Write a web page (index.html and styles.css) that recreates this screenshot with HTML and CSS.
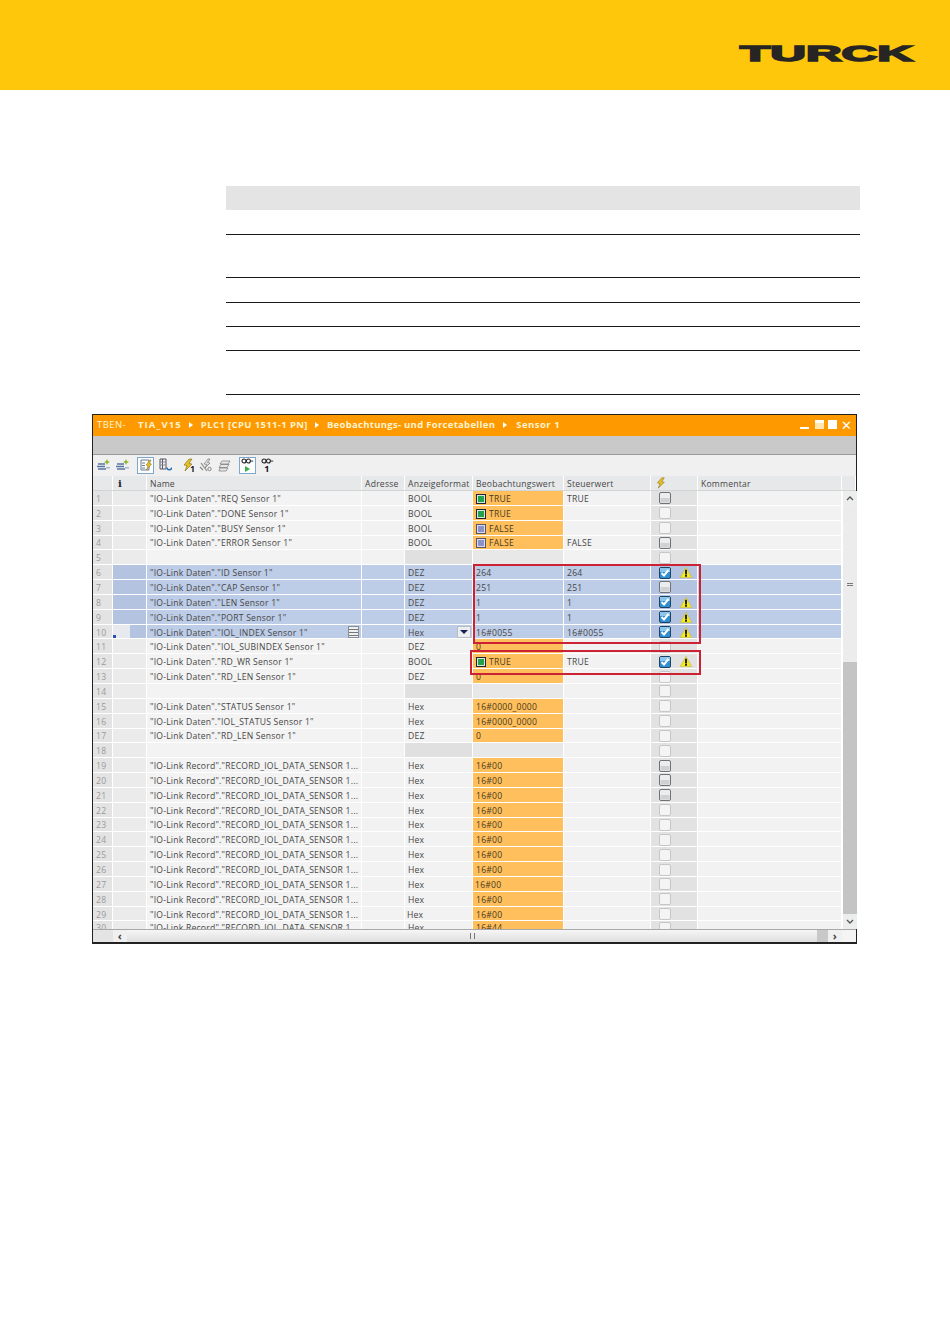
FILE: index.html
```html
<!DOCTYPE html>
<html lang="de">
<head>
<meta charset="utf-8">
<title>TURCK</title>
<link rel="stylesheet" href="styles.css">
</head>
<body>
<svg class="defs" width="0" height="0" aria-hidden="true">
  <symbol id="cb" viewBox="0 0 12 12"><rect x=".5" y=".5" width="11" height="11" rx="1.5" fill="#eceded" stroke="#6f7376"/><rect x="1.5" y="6" width="9" height="4.5" fill="#cfd1d3"/></symbol>
  <symbol id="cl" viewBox="0 0 12 12"><rect x=".5" y=".5" width="11" height="11" rx="1.5" fill="#f4f4f4" stroke="#c4c6c8"/></symbol>
  <symbol id="cc" viewBox="0 0 12 12"><rect x=".5" y=".5" width="11" height="11" rx="1.5" fill="#2f8fd0" stroke="#1f4462"/><rect x="1" y="1" width="10" height="4" fill="#8cc6ee"/><path d="M2.5 6l2.5 2.5 4.5-5.5" fill="none" stroke="#fff" stroke-width="2"/></symbol>
  <symbol id="wa" viewBox="0 0 12 11"><path d="M6 .3L11.8 10.7H.2z" fill="#f6ea18" stroke="#bdb660" stroke-width=".6"/><path d="M5.1 2.8h1.8v4.6H5.1zM5.1 8h1.8v1.7H5.1z" fill="#111"/></symbol>
  <symbol id="bl" viewBox="0 0 14 14"><path d="M1 6h7M0 8.5h8M1 11h8" stroke="#5a76a0" stroke-width="1.3"/><path d="M10 1l.9 2.1L13 4l-2.1.9L10 7l-.9-2.1L7 4l2.1-.9z" fill="#8fb52e"/><path d="M9 9h4v1.5H9z" fill="#a4b8d0"/></symbol>
  <symbol id="bo" viewBox="0 0 14 14"><path d="M9 1L4 7l3 .5L5 13l7-7-3-.5L12 1z" fill="#e8c020" stroke="#7a6a20" stroke-width=".6"/></symbol>
  <symbol id="wr" viewBox="0 0 14 14"><path d="M9 1L5 6l3 .5L6 10l5-5-2.500-.5L11 1z" fill="#e4e4e4" stroke="#777" stroke-width=".7"/><path d="M2 5l6 8M1 9l3 3" stroke="#888" stroke-width="1.200" fill="none"/><circle cx="10.500" cy="11" r="1.700" fill="none" stroke="#888"/></symbol>
  <symbol id="st" viewBox="0 0 14 14"><path d="M4 3h8l-2 3h-8zM3 6.500h8l-2 3h-8zM2 10h8l-2 3h-7z" fill="#e8e8e8" stroke="#777" stroke-width=".7"/></symbol>
  <symbol id="gl" viewBox="0 0 14 8"><circle cx="3" cy="3.500" r="2.300" fill="none" stroke="#222" stroke-width="1.200"/><circle cx="8" cy="3.500" r="2.300" fill="none" stroke="#222" stroke-width="1.200"/><path d="M10 3.500h3.500" stroke="#222"/></symbol>
  <symbol id="up" viewBox="0 0 8 5"><path d="M1 4l3-3 3 3" fill="none" stroke="#555" stroke-width="1.300"/></symbol>
  <symbol id="dn" viewBox="0 0 8 5"><path d="M1 1l3 3 3-3" fill="none" stroke="#555" stroke-width="1.300"/></symbol>
</svg>

<header class="band">
  <svg class="logo" viewBox="0 0 175 18" role="img" aria-label="TURCK"><text x="1" y="16.300" textLength="173" lengthAdjust="spacingAndGlyphs" class="logo-text">TURCK</text></svg>
</header>

<section class="doc">
  <div class="dt-head"></div>
  <div class="dt-row h25"></div>
  <div class="dt-row h43"></div>
  <div class="dt-row h25"></div>
  <div class="dt-row h24"></div>
  <div class="dt-row h24"></div>
  <div class="dt-row h44"></div>
</section>

<section class="win">
  <div class="title">
    <span class="t0">TBEN-</span><span class="t1">TIA_V15</span><i class="arr"></i><span class="t2">PLC1 [CPU 1511-1 PN]</span><i class="arr"></i><span class="t3">Beobachtungs- und Forcetabellen</span><i class="arr"></i><span class="t4">Sensor 1</span>
    <span class="ctl"><i class="c-min"></i><i class="c-res"></i><i class="c-max"></i><span class="c-x">✕</span></span>
  </div>
  <div class="band2"></div>
  <div class="tools">
    <svg class="ti"><use href="#bl"/></svg>
    <svg class="ti"><use href="#bl"/></svg>
    <span class="on"><svg class="ti" viewBox="0 0 14 14"><path d="M2 2h8v10H2z" fill="#fff" stroke="#6a7a90"/><path d="M3 5h3M3 7.500h3M3 10h3" stroke="#6a7a90"/><path d="M11 2L7 7l2 .5L7.500 12 12.500 6l-2-.5L12 2z" fill="#e8c020" stroke="#7a6a20" stroke-width=".5"/></svg></span>
    <svg class="ti l1" viewBox="0 0 14 14"><path d="M2 1h6v10H2zM4.500 1v10" fill="none" stroke="#556" /><path d="M2 4h6M2 7h6" stroke="#889"/><path d="M9 9.500a2.300 2.300 0 1 0 4.600 0" fill="none" stroke="#2a70b0" stroke-width="1.500"/></svg>
    <span class="bolt1"><svg class="ti"><use href="#bo"/></svg><b>1</b></span>
    <svg class="ti"><use href="#wr"/></svg>
    <svg class="ti"><use href="#st"/></svg>
    <span class="on on2"><svg class="gl"><use href="#gl"/></svg><i class="play"></i></span>
    <span class="g1"><svg class="gl"><use href="#gl"/></svg><b>1</b></span>
  </div>
  <div class="thead">
    <span></span><span class="info">i</span><span>Name</span><span>Adresse</span><span>Anzeigeformat</span><span>Beobachtungswert</span><span>Steuerwert</span><span><svg class="bolt"><use href="#bo"/></svg></span><span>Kommentar</span><span></span>
  </div>
  <div class="body">
    <div class="rows">
      <div class="r"><s>1</s><u></u><em>"IO-Link Daten"."REQ Sensor 1"</em><u></u><u class="f">BOOL</u><u class="v"><i class="sq g"></i>TRUE</u><u>TRUE</u><u class="x"><svg class="ck"><use href="#cb"/></svg></u><u></u></div>
      <div class="r"><s>2</s><u></u><em>"IO-Link Daten"."DONE Sensor 1"</em><u></u><u class="f">BOOL</u><u class="v"><i class="sq g"></i>TRUE</u><u></u><u class="x"><svg class="ck"><use href="#cl"/></svg></u><u></u></div>
      <div class="r"><s>3</s><u></u><em>"IO-Link Daten"."BUSY Sensor 1"</em><u></u><u class="f">BOOL</u><u class="v"><i class="sq b"></i>FALSE</u><u></u><u class="x"><svg class="ck"><use href="#cl"/></svg></u><u></u></div>
      <div class="r"><s>4</s><u></u><em>"IO-Link Daten"."ERROR Sensor 1"</em><u></u><u class="f">BOOL</u><u class="v"><i class="sq b"></i>FALSE</u><u>FALSE</u><u class="x"><svg class="ck"><use href="#cb"/></svg></u><u></u></div>
      <div class="r e"><s>5</s><u></u><em></em><u></u><u class="f"></u><u class="n"></u><u></u><u class="x"><svg class="ck"><use href="#cl"/></svg></u><u></u></div>
      <div class="r sel"><s>6</s><u></u><em>"IO-Link Daten"."ID Sensor 1"</em><u></u><u class="f">DEZ</u><u>264</u><u>264</u><u class="x"><svg class="ck"><use href="#cc"/></svg><svg class="wa"><use href="#wa"/></svg></u><u></u></div>
      <div class="r sel"><s>7</s><u></u><em>"IO-Link Daten"."CAP Sensor 1"</em><u></u><u class="f">DEZ</u><u>251</u><u>251</u><u class="x"><svg class="ck"><use href="#cb"/></svg></u><u></u></div>
      <div class="r sel"><s>8</s><u></u><em>"IO-Link Daten"."LEN Sensor 1"</em><u></u><u class="f">DEZ</u><u>1</u><u>1</u><u class="x"><svg class="ck"><use href="#cc"/></svg><svg class="wa"><use href="#wa"/></svg></u><u></u></div>
      <div class="r sel"><s>9</s><u></u><em>"IO-Link Daten"."PORT Sensor 1"</em><u></u><u class="f">DEZ</u><u>1</u><u>1</u><u class="x"><svg class="ck"><use href="#cc"/></svg><svg class="wa"><use href="#wa"/></svg></u><u></u></div>
      <div class="r sel act"><s>10</s><u class="mark"><i class="lite"></i><i class="dot"></i></u><em>"IO-Link Daten"."IOL_INDEX Sensor 1"<i class="mini"></i></em><u></u><u class="f">Hex<i class="drop"></i></u><u>16#0055</u><u>16#0055</u><u class="x"><svg class="ck"><use href="#cc"/></svg><svg class="wa"><use href="#wa"/></svg></u><u></u></div>
      <div class="r"><s>11</s><u></u><em>"IO-Link Daten"."IOL_SUBINDEX Sensor 1"</em><u></u><u class="f">DEZ</u><u class="v">0</u><u></u><u class="x"><svg class="ck"><use href="#cl"/></svg></u><u></u></div>
      <div class="r"><s>12</s><u></u><em>"IO-Link Daten"."RD_WR Sensor 1"</em><u></u><u class="f">BOOL</u><u class="v"><i class="sq g"></i>TRUE</u><u>TRUE</u><u class="x"><svg class="ck"><use href="#cc"/></svg><svg class="wa"><use href="#wa"/></svg></u><u></u></div>
      <div class="r"><s>13</s><u></u><em>"IO-Link Daten"."RD_LEN Sensor 1"</em><u></u><u class="f">DEZ</u><u class="v">0</u><u></u><u class="x"><svg class="ck"><use href="#cl"/></svg></u><u></u></div>
      <div class="r e"><s>14</s><u></u><em></em><u></u><u class="f"></u><u class="n"></u><u></u><u class="x"><svg class="ck"><use href="#cl"/></svg></u><u></u></div>
      <div class="r"><s>15</s><u></u><em>"IO-Link Daten"."STATUS Sensor 1"</em><u></u><u class="f">Hex</u><u class="v">16#0000_0000</u><u></u><u class="x"><svg class="ck"><use href="#cl"/></svg></u><u></u></div>
      <div class="r"><s>16</s><u></u><em>"IO-Link Daten"."IOL_STATUS Sensor 1"</em><u></u><u class="f">Hex</u><u class="v">16#0000_0000</u><u></u><u class="x"><svg class="ck"><use href="#cl"/></svg></u><u></u></div>
      <div class="r"><s>17</s><u></u><em>"IO-Link Daten"."RD_LEN Sensor 1"</em><u></u><u class="f">DEZ</u><u class="v">0</u><u></u><u class="x"><svg class="ck"><use href="#cl"/></svg></u><u></u></div>
      <div class="r e"><s>18</s><u></u><em></em><u></u><u class="f"></u><u class="n"></u><u></u><u class="x"><svg class="ck"><use href="#cl"/></svg></u><u></u></div>
      <div class="r"><s>19</s><u></u><em>"IO-Link Record"."RECORD_IOL_DATA_SENSOR 1...</em><u></u><u class="f">Hex</u><u class="v">16#00</u><u></u><u class="x"><svg class="ck"><use href="#cb"/></svg></u><u></u></div>
      <div class="r"><s>20</s><u></u><em>"IO-Link Record"."RECORD_IOL_DATA_SENSOR 1...</em><u></u><u class="f">Hex</u><u class="v">16#00</u><u></u><u class="x"><svg class="ck"><use href="#cb"/></svg></u><u></u></div>
      <div class="r"><s>21</s><u></u><em>"IO-Link Record"."RECORD_IOL_DATA_SENSOR 1...</em><u></u><u class="f">Hex</u><u class="v">16#00</u><u></u><u class="x"><svg class="ck"><use href="#cb"/></svg></u><u></u></div>
      <div class="r"><s>22</s><u></u><em>"IO-Link Record"."RECORD_IOL_DATA_SENSOR 1...</em><u></u><u class="f">Hex</u><u class="v">16#00</u><u></u><u class="x"><svg class="ck"><use href="#cl"/></svg></u><u></u></div>
      <div class="r"><s>23</s><u></u><em>"IO-Link Record"."RECORD_IOL_DATA_SENSOR 1...</em><u></u><u class="f">Hex</u><u class="v">16#00</u><u></u><u class="x"><svg class="ck"><use href="#cl"/></svg></u><u></u></div>
      <div class="r"><s>24</s><u></u><em>"IO-Link Record"."RECORD_IOL_DATA_SENSOR 1...</em><u></u><u class="f">Hex</u><u class="v">16#00</u><u></u><u class="x"><svg class="ck"><use href="#cl"/></svg></u><u></u></div>
      <div class="r"><s>25</s><u></u><em>"IO-Link Record"."RECORD_IOL_DATA_SENSOR 1...</em><u></u><u class="f">Hex</u><u class="v">16#00</u><u></u><u class="x"><svg class="ck"><use href="#cl"/></svg></u><u></u></div>
      <div class="r"><s>26</s><u></u><em>"IO-Link Record"."RECORD_IOL_DATA_SENSOR 1...</em><u></u><u class="f">Hex</u><u class="v">16#00</u><u></u><u class="x"><svg class="ck"><use href="#cl"/></svg></u><u></u></div>
      <div class="r"><s>27</s><u></u><em>"IO-Link Record"."RECORD_IOL_DATA_SENSOR 1...</em><u></u><u class="f">Hex</u><u class="v nudge">16#00</u><u></u><u class="x"><svg class="ck"><use href="#cl"/></svg></u><u></u></div>
      <div class="r"><s>28</s><u></u><em>"IO-Link Record"."RECORD_IOL_DATA_SENSOR 1...</em><u></u><u class="f">Hex</u><u class="v">16#00</u><u></u><u class="x"><svg class="ck"><use href="#cl"/></svg></u><u></u></div>
      <div class="r"><s>29</s><u></u><em>"IO-Link Record"."RECORD_IOL_DATA_SENSOR 1...</em><u></u><u class="f nudge">Hex</u><u class="v">16#00</u><u></u><u class="x"><svg class="ck"><use href="#cl"/></svg></u><u></u></div>
      <div class="r last"><s>30</s><u></u><em>"IO-Link Record"."RECORD_IOL_DATA_SENSOR 1...</em><u></u><u class="f">Hex</u><u class="v">16#44</u><u></u><u class="x"><svg class="ck"><use href="#cl"/></svg></u><u></u></div>
    </div>
    <div class="vbar">
      <span class="btn"><svg class="chev"><use href="#up"/></svg></span>
      <span class="thumb"><i class="grip"></i></span>
      <span class="track"></span>
      <span class="btn"><svg class="chev"><use href="#dn"/></svg></span>
    </div>
  </div>
  <div class="hbar">
    <span class="hgap"></span>
    <span class="hbtn">‹</span>
    <span class="hthumb"><i class="hgrip"></i></span>
    <span class="htrack"></span>
    <span class="hbtn">›</span>
    <span class="corner"></span>
  </div>
  <div class="red r1"></div>
  <div class="red r2"></div>
</section>
</body>
</html>
```

FILE: styles.css
```css
* { box-sizing: border-box; }
html, body { margin: 0; padding: 0; }
body { background: #fff; width: 950px; height: 1344px; overflow: hidden; font-family: "Open Sans", "Liberation Sans", sans-serif; }
.defs { position: absolute; }
.band { height: 90px; background: #fec70c; display: flex; justify-content: flex-end; padding: 45px 36px 0 0; }
.logo { width: 175px; height: 18px; overflow: visible; }
.logo-text { font-family: "Liberation Sans", sans-serif; font-weight: 700; font-size: 22px; fill: #262523; stroke: #262523; stroke-width: 1.5px; }

.doc { margin: 96px 90px 0 226px; }
.dt-head { height: 24px; background: #e4e4e4; }
.dt-row { border-bottom: 1px solid #1a1a1a; }
.h25 { height: 25px; }
.h43 { height: 43px; }
.h24 { height: 24px; }
.h44 { height: 44px; }

.win { position: relative; width: 765px; height: 530px; margin: 19px 0 0 92px; border: 1px solid #222; border-bottom-width: 2px; display: flex; flex-direction: column; font-size: 8.6px; color: #464646; background: #f2f2f2; letter-spacing: .22px; }
.title { height: 21px; flex: none; background: #fe9a00; color: #fff3d0; font-weight: 700; font-size: 9.5px; letter-spacing: .42px; display: flex; align-items: center; padding: 0 0 2px 4px; gap: 7.5px; white-space: nowrap; }
.t0 { width: 33.5px; font-weight: 400; }
.t1 { letter-spacing: 1.1px; }
.t2 { letter-spacing: .37px; }
.t3 { letter-spacing: .3px; }
.t4 { letter-spacing: .5px; margin-left: 2px; }
.arr { width: 0; height: 0; border-left: 4px solid #fff; border-top: 3px solid transparent; border-bottom: 3px solid transparent; }
.ctl { margin-left: auto; display: flex; align-items: center; gap: 4px; padding-right: 3px; }
.c-min { width: 9px; height: 2px; background: #fff; margin: 7px 2px 0 0; }
.c-res { width: 9px; height: 9px; background: #ffe6b0; border-top: 3px solid #fff; }
.c-max { width: 9px; height: 9px; background: #fff; }
.c-x { font-size: 13px; font-weight: 400; color: #fff; line-height: 10px; width: 12px; }
.band2 { height: 19px; flex: none; background: #c9c9c9; border-bottom: 1px solid #9a9a9a; }
.tools { height: 21px; flex: none; background: #f0f0f0; display: flex; align-items: center; padding: 0 0 1px 4px; }
.ti { width: 14px; height: 14px; flex: none; margin-right: 5px; }
.on { width: 17px; height: 17px; border: 1px solid #7fa7c9; background: #fdfdfd; display: flex; align-items: center; justify-content: center; margin-right: 4px; margin-left: 2px; flex: none; }
.on .ti { margin: 0; }
.bolt1 { display: flex; margin-left: 3px; margin-right: 5px; width: 14px; position: relative; font-size: 8px; color: #111; }
.bolt1 b { position: absolute; right: -1px; bottom: -1px; line-height: 8px; }
.on2 { flex-direction: column; margin-left: 2px; gap: 1px; }
.gl { width: 13px; height: 7px; display: block; flex: none; }
.play { width: 0; height: 0; border-left: 5px solid #3db04a; border-top: 3px solid transparent; border-bottom: 3px solid transparent; }
.g1 { display: flex; flex-direction: column; align-items: center; width: 14px; line-height: 7px; color: #111; font-size: 8px; }
.g1 b { font-size: 9px; }
.thead { height: 15px; flex: none; display: grid; grid-template-columns: 20px 34px 215px 43px 68px 91px 87px 47px 144px 1fr; background: #e6e8ea; border-bottom: 1px solid #d2d4d6; }
.thead span { border-right: 1px solid #fff; padding: 1px 0 0 3px; line-height: 15px; white-space: nowrap; overflow: hidden; }
.thead .info { font-weight: 700; color: #223; font-family: "DejaVu Serif", serif; padding: 0 0 0 5px; font-size: 10px; }
.bolt { width: 12px; height: 12px; display: block; }

.body { height: 438px; flex: none; display: flex; }
.rows { width: 749px; flex: none; overflow: hidden; background: #fff; }
.r { height: 14.857px; display: grid; grid-template-columns: 20px 34px 215px 43px 68px 91px 87px 47px 144px; background: #fff; border-bottom: 1px solid #fff; overflow: hidden; }
.r.last { height: 8px; border-bottom: 0; }
.r > * { display: flex; align-items: center; border-right: 1px solid #fff; text-decoration: none; font-style: normal; background: #f2f2f2; white-space: nowrap; overflow: hidden; min-width: 0; padding: 2px 0 0 3px; }
.r.last > * { align-items: flex-start; padding-top: 1px; }
.r > s { background: #e3e3e3; color: #9a9a9a; }
.r > u:nth-child(2) { background: #ebebeb; }
.r > em { background: #f3f3f3; position: relative; }
.r > .f { position: relative; }
.r > .v { background: #febf5c; color: #4a3a1c; }
.r > .nudge { padding-left: 2px; }
.r > .x { background: #e2e2e2; padding: 1px 0 0 8px; gap: 9px; }
.r.e > .f { background: #e0e0e0; }
.r.e > .n { background: #e8e8e8; }
.r.sel > * { background: #bdcce7; }
.r.sel > s { background: #e3e3e3; }
.r.sel > u:nth-child(2) { background: #b3c3e0; }
.r.sel > .x { background: #b3c3e0; }
.act > .mark { position: relative; }
.lite { position: absolute; left: 0; top: 0; bottom: 0; width: 17px; background: #e6e9ee; }
.dot { position: absolute; left: 0; bottom: 0; width: 3px; height: 3px; background: #2a50b8; }
.mini { position: absolute; right: 2px; top: 1px; width: 11px; height: 12px; background: repeating-linear-gradient(#eef0f2 0 2px, #777 2px 3px); border: 1px solid #8a8f96; }
.drop { position: absolute; right: 1px; top: 1px; width: 14px; height: 12px; background: #eceef0; border: 1px solid #b8bcc4; }
.drop::after { content: ""; position: absolute; left: 2px; top: 3px; border-top: 4px solid #14205a; border-left: 4px solid transparent; border-right: 4px solid transparent; }
.sq { width: 10px; height: 10px; flex: none; margin-right: 3px; border: 1px solid #223; }
.sq.g { background: #22a24a; box-shadow: inset 0 0 0 1px #d8e8d8; }
.sq.b { background: #8c92c8; box-shadow: inset 0 0 0 1px #dcdcec; border-color: #556; }
.ck { width: 12px; height: 12px; flex: none; }
.wa { width: 12px; height: 11px; flex: none; }

.vbar { width: 15px; flex: none; display: flex; flex-direction: column; background: #c4c4c4; border-left: 1px solid #fff; }
.btn { height: 15px; flex: none; background: #eceeee; display: flex; align-items: center; justify-content: center; }
.chev { width: 8px; height: 5px; }
.thumb { height: 156px; flex: none; background: #ececec; display: flex; align-items: center; justify-content: center; }
.grip { width: 6px; height: 3px; border-top: 1px solid #777; border-bottom: 1px solid #777; }
.track { flex: 1; background: #c4c4c4; }

.hbar { height: 13px; flex: none; display: flex; background: #e8e8e8; border-top: 1px solid #a8a8a8; }
.hgap { width: 20px; background: #e4e4e4; }
.hbtn { width: 14px; flex: none; text-align: center; line-height: 11px; font-size: 11px; font-weight: 700; color: #444; background: #f0f0f0; }
.hthumb { width: 690px; flex: none; background: linear-gradient(#f6f6f6, #dedede); display: flex; align-items: center; justify-content: center; }
.hgrip { width: 5px; height: 6px; border-left: 1px solid #777; border-right: 1px solid #777; }
.htrack { width: 11px; flex: none; background: #c8c8c8; }
.corner { flex: 1; background: #f4f4f4; }

.red { position: absolute; border: 2px solid #cc2233; pointer-events: none; }
.r1 { left: 380px; top: 149px; width: 228px; height: 80px; }
.r2 { left: 377px; top: 235px; width: 231px; height: 25px; }
```
